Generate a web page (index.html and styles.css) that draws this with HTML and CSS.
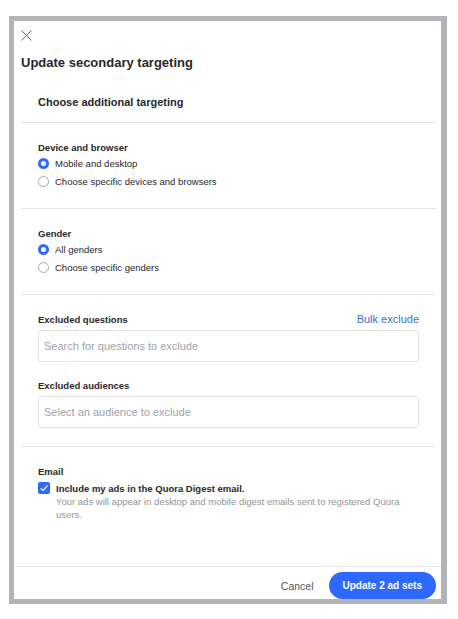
FILE: index.html
```html
<!DOCTYPE html>
<html lang="en">
<head>
	<meta charset="UTF-8">
	<title>Update secondary targeting</title>
	<link rel="stylesheet" href="styles.css">
</head>
<body>
	<div class="frame">
		<div class="modal">
			<div class="modal-head">
				<button class="close" type="button" aria-label="Close">
					<svg width="11" height="11" viewBox="0 0 11 11"><path d="M0.5 0.5L10.5 10.5M10.5 0.5L0.5 10.5" stroke="#6b6b6b" stroke-width="1" fill="none"/></svg>
				</button>
				<h1 class="title">Update secondary targeting</h1>
			</div>

			<div class="modal-body">
				<h2 class="subtitle">Choose additional targeting</h2>

				<!-- device -->
				<div class="group">
					<div class="label">Device and browser</div>
					<label class="radio"><span class="dot checked"></span>Mobile and desktop</label>
					<label class="radio"><span class="dot"></span>Choose specific devices and browsers</label>
				</div>

				<!-- gender -->
				<div class="group">
					<div class="label">Gender</div>
					<label class="radio"><span class="dot checked"></span>All genders</label>
					<label class="radio"><span class="dot"></span>Choose specific genders</label>
				</div>

				<!-- exclusions -->
				<div class="group">
					<div class="label-row">
						<div class="label">Excluded questions</div>
						<a class="link" href="#">Bulk exclude</a>
					</div>
					<input class="field" type="text" placeholder="Search for questions to exclude">
					<div class="label second">Excluded audiences</div>
					<input class="field" type="text" placeholder="Select an audience to exclude">
				</div>

				<!-- email -->
				<div class="group last">
					<div class="label">Email</div>
					<div class="check">
						<span class="box">
							<svg width="12" height="12" viewBox="0 0 12 12"><path d="M2.6 6.2L5 8.6L9.6 3.4" stroke="#fff" stroke-width="1.2" fill="none"/></svg>
						</span>
						<div>
							<div class="check-title">Include my ads in the Quora Digest email.</div>
							<div class="check-desc">Your ads will appear in desktop and mobile digest emails sent to registered Quora users.</div>
						</div>
					</div>
				</div>
			</div>

			<div class="modal-foot">
				<button class="cancel" type="button">Cancel</button>
				<button class="primary" type="button">Update 2 ad sets</button>
			</div>
		</div>
	</div>
</body>
</html>
```

FILE: styles.css
```css
*{
	box-sizing: border-box;
}
body{
	margin: 0;
	background: #fff;
	font-family: "Liberation Sans", Arial, sans-serif;
	color: #282829;
}
.frame{
	margin: 16px 0 0 9px;
	width: 438px;
	height: 588px;
	border: solid #b3b4b8;
	border-width: 5px 6px 5px 5px;
}
.modal{
	height: 100%;
	display: flex;
	flex-direction: column;
	background: #fff;
}
.modal-head{
	padding: 9px 0 0 7px;
}
.close{
	display: block;
	padding: 0;
	border: 0;
	background: none;
	width: 11px;
	height: 11px;
	cursor: pointer;
}
.close svg{
	display: block;
}
.title{
	margin: 14px 0 0;
	font-size: 13px;
	line-height: 16px;
	font-weight: bold;
}
.modal-body{
	margin: 0 5px 0 7px;
}
.subtitle{
	margin: 24px 0 0;
	padding: 0 17px 13px;
	font-size: 11px;
	line-height: 14px;
	font-weight: bold;
}
.group{
	border-top: 1px solid #e6e6e6;
	padding: 18px 17px;
}
.group.last{
	padding-bottom: 0;
}
.label{
	font-size: 9.5px;
	line-height: 13px;
	font-weight: bold;
}
.label.second{
	margin-top: 17px;
	margin-bottom: 4px;
}
.label-row{
	display: flex;
	justify-content: space-between;
	align-items: center;
	margin-bottom: 4px;
}
.link{
	font-size: 11px;
	line-height: 13px;
	color: #3a6fd0;
	text-decoration: none;
}
.radio{
	display: flex;
	align-items: center;
	height: 18px;
	font-size: 9.5px;
}
.dot{
	width: 11px;
	height: 11px;
	margin-right: 6px;
	border: 1px solid #a9a9ab;
	border-radius: 50%;
	background: #fff;
}
.dot.checked{
	border: 3.5px solid #2e69ff;
	background: #fff;
}
.field{
	display: block;
	width: 100%;
	height: 32px;
	padding: 0 5px;
	border: 1px solid #e2e2e3;
	border-radius: 3px;
	font-family: inherit;
	font-size: 11px;
	color: #282829;
	outline: none;
}
.field::placeholder{
	color: #a1a2a5;
}
.check{
	display: flex;
	align-items: flex-start;
	margin-top: 4px;
}
.box{
	flex: none;
	width: 12px;
	height: 12px;
	margin-right: 6px;
	border-radius: 2px;
	background: #2e69ff;
}
.box svg{
	display: block;
}
.check-title{
	font-size: 9.5px;
	line-height: 13px;
	font-weight: bold;
}
.check-desc{
	font-size: 9.5px;
	line-height: 13px;
	color: #939598;
	max-width: 360px;
}
.modal-foot{
	margin-top: auto;
	border-top: 1px solid #e6e6e6;
	height: 33px;
	padding: 5px 5px 0;
	display: flex;
	justify-content: flex-end;
	align-items: center;
}
.cancel{
	margin-right: 15px;
	padding: 0;
	border: 0;
	background: none;
	font-family: inherit;
	font-size: 10.5px;
	color: #555657;
	cursor: pointer;
}
.primary{
	height: 27px;
	padding: 0 14px;
	border: 0;
	border-radius: 14px;
	background: #2e69ff;
	color: #fff;
	font-family: inherit;
	font-size: 10px;
	font-weight: bold;
	cursor: pointer;
}
```
